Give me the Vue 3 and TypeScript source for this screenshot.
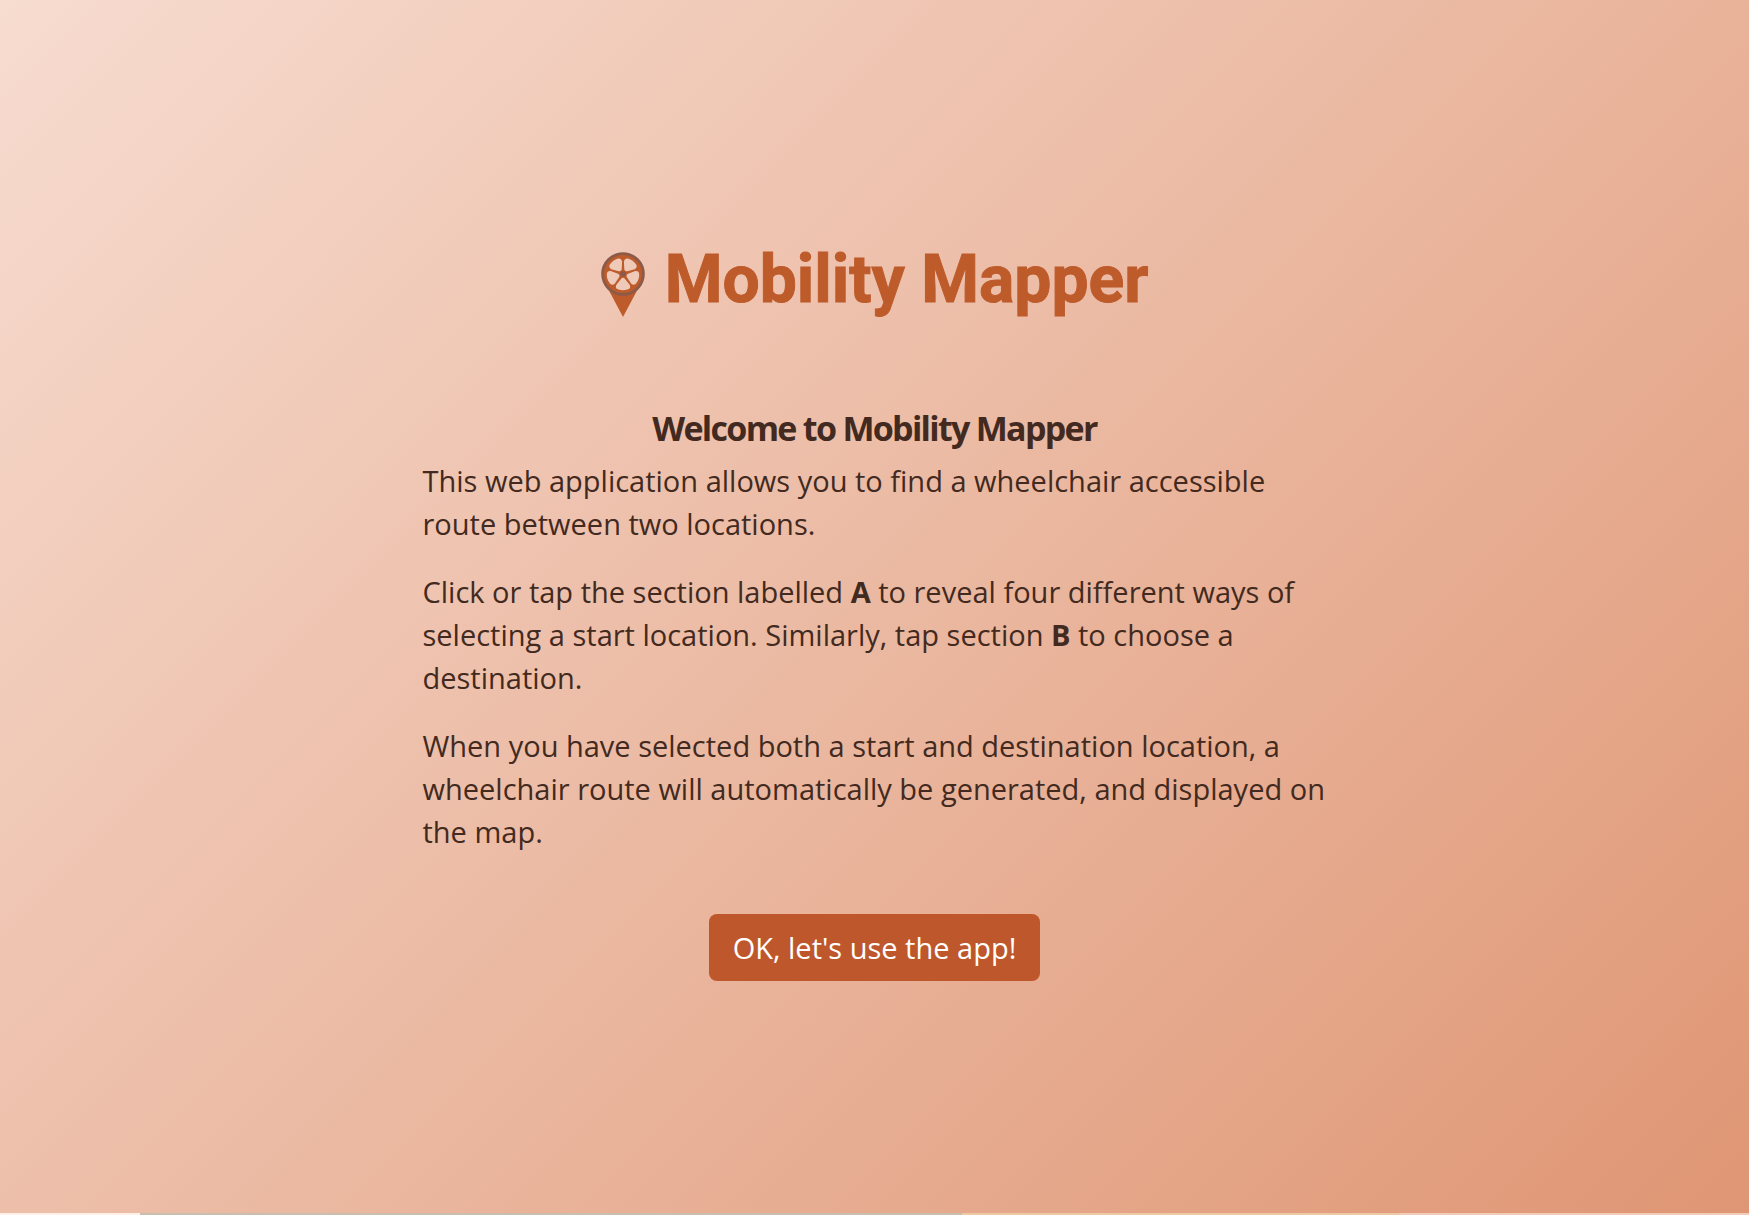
<script setup lang="ts">
const windows: number[] = [36, 108, 180, 252, 324]
</script>

<template>
  <main class="welcome">
    <h1 class="brand">
      <svg class="pin" viewBox="0 0 44 66" aria-hidden="true">
        <path d="M4 31 L22 65 L40 31 Z" fill="#be5b2b" />
        <circle cx="22" cy="22" r="20.4" fill="#be5b2b" stroke="#8c5a48" stroke-width="2.8" />
        <path
          v-for="angle in windows"
          :key="angle"
          :transform="`rotate(${angle} 22 22)`"
          d="M20.8 16.8 L16 10.8 Q15 8.4 17.2 7.4 Q22 5.6 26.8 7.4 Q29 8.4 28 10.8 L23.2 16.8 Q22 18 20.8 16.8 Z"
          fill="#efcab9"
          stroke="#efcab9"
          stroke-width="1.6"
          stroke-linejoin="round"
        />
        <circle cx="22" cy="22" r="2.8" fill="#8c5a48" />
      </svg>
      <span class="wordmark">Mobility Mapper</span>
    </h1>
    <section class="intro">
      <h2>Welcome to Mobility Mapper</h2>
      <p>This web application allows you to find a wheelchair accessible route between two locations.</p>
      <p>
        Click or tap the section labelled <strong>A</strong> to reveal four different ways of selecting a
        start location. Similarly, tap section <strong>B</strong> to choose a destination.
      </p>
      <p>
        When you have selected both a start and destination location, a wheelchair route will
        automatically be generated, and displayed on the map.
      </p>
    </section>
    <button type="button" class="start">OK, let's use the app!</button>
  </main>
  <div class="map-edge"></div>
</template>

<style>
body {
  background: #f3cbb9;
}

#app {
  display: flex;
  flex-direction: column;
  min-height: 100vh;
}
</style>

<style scoped>
.welcome {
  flex: 1;
  display: flex;
  flex-direction: column;
  align-items: center;
  justify-content: center;
  box-sizing: border-box;
  padding-top: 20px;
  color: #432a20;
  font-family: "Open Sans", "Noto Sans", sans-serif;
  font-size: 29px;
  line-height: 43px;
  background: linear-gradient(135deg, #f7dcd0, #df9674);
}

.brand {
  display: flex;
  align-items: flex-start;
  gap: 20px;
  margin: 0 0 86px;
}

.pin {
  width: 44px;
  height: 66px;
}

.wordmark {
  color: #be5b2b;
  font-family: Roboto, "Open Sans", sans-serif;
  font-size: 66px;
  font-weight: 700;
  line-height: 56px;
  -webkit-text-stroke: 1px #be5b2b;
}

.intro {
  width: 100%;
  max-width: 904px;
}

h2 {
  margin: 0 0 7px;
  text-align: center;
  font-size: 34px;
  font-weight: 700;
  line-height: 48px;
  letter-spacing: -0.05em;
}

p {
  margin: 0 0 25px;
}

.start {
  margin-top: 36px;
  padding: 12px 24px;
  border: 0;
  border-radius: 8px;
  background: #be572b;
  color: #fff;
  font: inherit;
}

.map-edge {
  height: 2px;
  background: linear-gradient(90deg, #fff0e8 0 8%, #c9bfae 8% 55%, #efc8a4 55% 80%, #f3cbb9 80%);
}
</style>
